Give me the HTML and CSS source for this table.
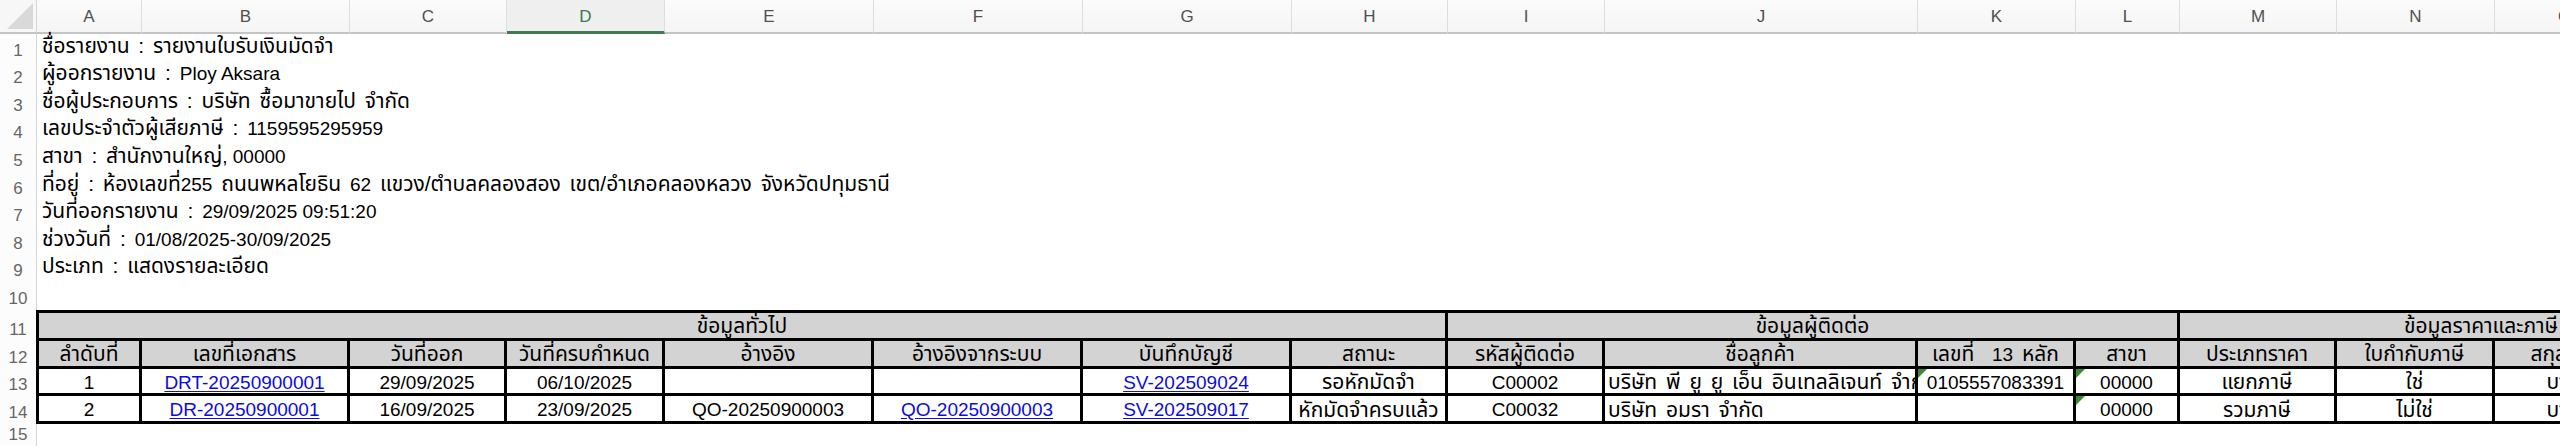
FILE: index.html
```html
<!DOCTYPE html>
<html lang="th">
<head>
<meta charset="utf-8">
<title>รายงานใบรับเงินมัดจำ</title>
<link rel="stylesheet" href="styles.css">
</head>
<body>
<div class="sheet">
  <div class="corner"><span class="corner-tri"></span></div>
  <div class="ch">A</div><div class="ch">B</div><div class="ch">C</div><div class="ch sel">D</div>
  <div class="ch">E</div><div class="ch">F</div><div class="ch">G</div><div class="ch">H</div>
  <div class="ch">I</div><div class="ch">J</div><div class="ch">K</div><div class="ch">L</div>
  <div class="ch">M</div><div class="ch">N</div><div class="ch">O</div><div class="ch">P</div>

  <div class="rn">1</div><div class="line">ชื่อรายงาน : รายงานใบรับเงินมัดจำ</div>
  <div class="rn">2</div><div class="line">ผู้ออกรายงาน :&nbsp;<span class="lat">Ploy Aksara</span></div>
  <div class="rn">3</div><div class="line">ชื่อผู้ประกอบการ : บริษัท ซื้อมาขายไป จำกัด</div>
  <div class="rn">4</div><div class="line">เลขประจำตัวผู้เสียภาษี :&nbsp;<span class="lat">1159595295959</span></div>
  <div class="rn">5</div><div class="line">สาขา : สำนักงานใหญ่<span class="lat">, 00000</span></div>
  <div class="rn">6</div><div class="line">ที่อยู่ : ห้องเลขที่<span class="lat">255</span>&nbsp;ถนนพหลโยธิน&nbsp;<span class="lat">62</span>&nbsp;แขวง/ตำบลคลองสอง เขต/อำเภอคลองหลวง จังหวัดปทุมธานี</div>
  <div class="rn">7</div><div class="line">วันที่ออกรายงาน :&nbsp;<span class="lat">29/09/2025 09:51:20</span></div>
  <div class="rn">8</div><div class="line">ช่วงวันที่ :&nbsp;<span class="lat">01/08/2025-30/09/2025</span></div>
  <div class="rn">9</div><div class="line">ประเภท : แสดงรายละเอียด</div>
  <div class="rn">10</div><div class="line"></div>

  <div class="rn">11</div>
  <div class="c g top first span8">ข้อมูลทั่วไป</div>
  <div class="c g top span4">ข้อมูลผู้ติดต่อ</div>
  <div class="c g top span4">ข้อมูลราคาและภาษี</div>

  <div class="rn">12</div>
  <div class="c g first">ลำดับที่</div>
  <div class="c g">เลขที่เอกสาร</div>
  <div class="c g">วันที่ออก</div>
  <div class="c g">วันที่ครบกำหนด</div>
  <div class="c g">อ้างอิง</div>
  <div class="c g">อ้างอิงจากระบบ</div>
  <div class="c g">บันทึกบัญชี</div>
  <div class="c g">สถานะ</div>
  <div class="c g">รหัสผู้ติดต่อ</div>
  <div class="c g">ชื่อลูกค้า</div>
  <div class="c g">เลขที่  <span class="lat">13</span> หลัก</div>
  <div class="c g">สาขา</div>
  <div class="c g">ประเภทราคา</div>
  <div class="c g">ใบกำกับภาษี</div>
  <div class="c g">สกุลเงิน</div>
  <div class="c g">อัตราแลกเปลี่ยน</div>

  <div class="rn">13</div>
  <div class="c lat first">1</div>
  <div class="c lat"><span class="link">DRT-20250900001</span></div>
  <div class="c lat">29/09/2025</div>
  <div class="c lat">06/10/2025</div>
  <div class="c lat"></div>
  <div class="c lat"></div>
  <div class="c lat"><span class="link">SV-202509024</span></div>
  <div class="c">รอหักมัดจำ</div>
  <div class="c lat">C00002</div>
  <div class="c l">บริษัท พี ยู ยู เอ็น อินเทลลิเจนท์ จำกัด</div>
  <div class="c lat tri">0105557083391</div>
  <div class="c lat tri">00000</div>
  <div class="c">แยกภาษี</div>
  <div class="c">ใช่</div>
  <div class="c">บาท</div>
  <div class="c lat">1.00</div>

  <div class="rn">14</div>
  <div class="c lat first">2</div>
  <div class="c lat"><span class="link">DR-20250900001</span></div>
  <div class="c lat">16/09/2025</div>
  <div class="c lat">23/09/2025</div>
  <div class="c lat">QO-20250900003</div>
  <div class="c lat"><span class="link">QO-20250900003</span></div>
  <div class="c lat"><span class="link">SV-202509017</span></div>
  <div class="c">หักมัดจำครบแล้ว</div>
  <div class="c lat">C00032</div>
  <div class="c l">บริษัท อมรา จำกัด</div>
  <div class="c"></div>
  <div class="c lat tri">00000</div>
  <div class="c">รวมภาษี</div>
  <div class="c">ไม่ใช่</div>
  <div class="c">บาท</div>
  <div class="c lat">1.00</div>

  <div class="rn">15</div><div class="line"></div>
</div>
</body>
</html>
```

FILE: styles.css
```css
html, body {
  margin: 0;
  padding: 0;
  background: #ffffff;
  overflow: hidden;
}

body {
  width: 2560px;
  height: 446px;
  font-family: "Liberation Sans", "Noto Sans Thai", "Noto Sans", sans-serif;
  color: #000000;
}

.sheet {
  display: grid;
  grid-template-columns: 37px 105px 208px 157px 158px 209px 209px 209px 156px 157px 313px 158px 104px 157px 158px 140px 150px;
  grid-template-rows: 34px repeat(10, 27.6px) 30.8px 28px 27.7px 27.7px 1fr;
  width: max-content;
  height: 446px;
}

.corner {
  position: relative;
  background: #f7f7f7;
  border-right: 1px solid #d6d6d6;
  border-bottom: 2px solid #c4c4c4;
  box-sizing: border-box;
}

.corner-tri {
  position: absolute;
  right: 3px;
  bottom: 3px;
  width: 0;
  height: 0;
  border-left: 26px solid transparent;
  border-bottom: 26px solid #d9d9d9;
}

.ch {
  display: flex;
  align-items: center;
  justify-content: center;
  padding-top: 2px;
  box-sizing: border-box;
  background: linear-gradient(#fbfbfb, #f5f5f5);
  border-right: 1px solid #dedede;
  border-bottom: 2px solid #c4c4c4;
  font-size: 17px;
  color: #505050;
}

.ch.sel {
  background: #efefef;
  color: #3a7a4e;
  border-bottom: 3px solid #3f7a52;
}

.rn {
  display: flex;
  align-items: flex-end;
  justify-content: center;
  padding-bottom: 1px;
  box-sizing: border-box;
  background: #fcfcfc;
  border-right: 1px solid #d6d6d6;
  font-size: 17px;
  color: #666666;
}

.line {
  grid-column: span 16;
  display: flex;
  align-items: baseline;
  align-self: end;
  padding: 0 0 0 5px;
  box-sizing: border-box;
  font-size: 21px;
  word-spacing: 3px;
  white-space: pre;
}

.lat {
  font-size: 19px;
  word-spacing: normal;
}

.c {
  display: flex;
  align-items: center;
  justify-content: center;
  padding-top: 3px;
  box-sizing: border-box;
  border-right: 3px solid #000000;
  border-bottom: 3px solid #000000;
  font-size: 21px;
  word-spacing: 3px;
  white-space: pre;
  overflow: hidden;
  background: #ffffff;
  position: relative;
}

.c.lat {
  font-size: 19px;
  word-spacing: normal;
}

.c.g {
  background: #d3d3d3;
}

.c.top {
  border-top: 3px solid #000000;
}

.c.first {
  border-left: 3px solid #000000;
  margin-left: -1px;
}

.c.l {
  justify-content: flex-start;
  padding-left: 3px;
}

.span8 { grid-column: span 8; }
.span4 { grid-column: span 4; }

.link {
  color: #0c0cdc;
  text-decoration: underline;
  text-underline-offset: 2px;
}

.c.tri::before {
  content: "";
  position: absolute;
  left: 0;
  top: 0;
  width: 0;
  height: 0;
  border-top: 9px solid #3c8a2e;
  border-right: 9px solid transparent;
}
```
